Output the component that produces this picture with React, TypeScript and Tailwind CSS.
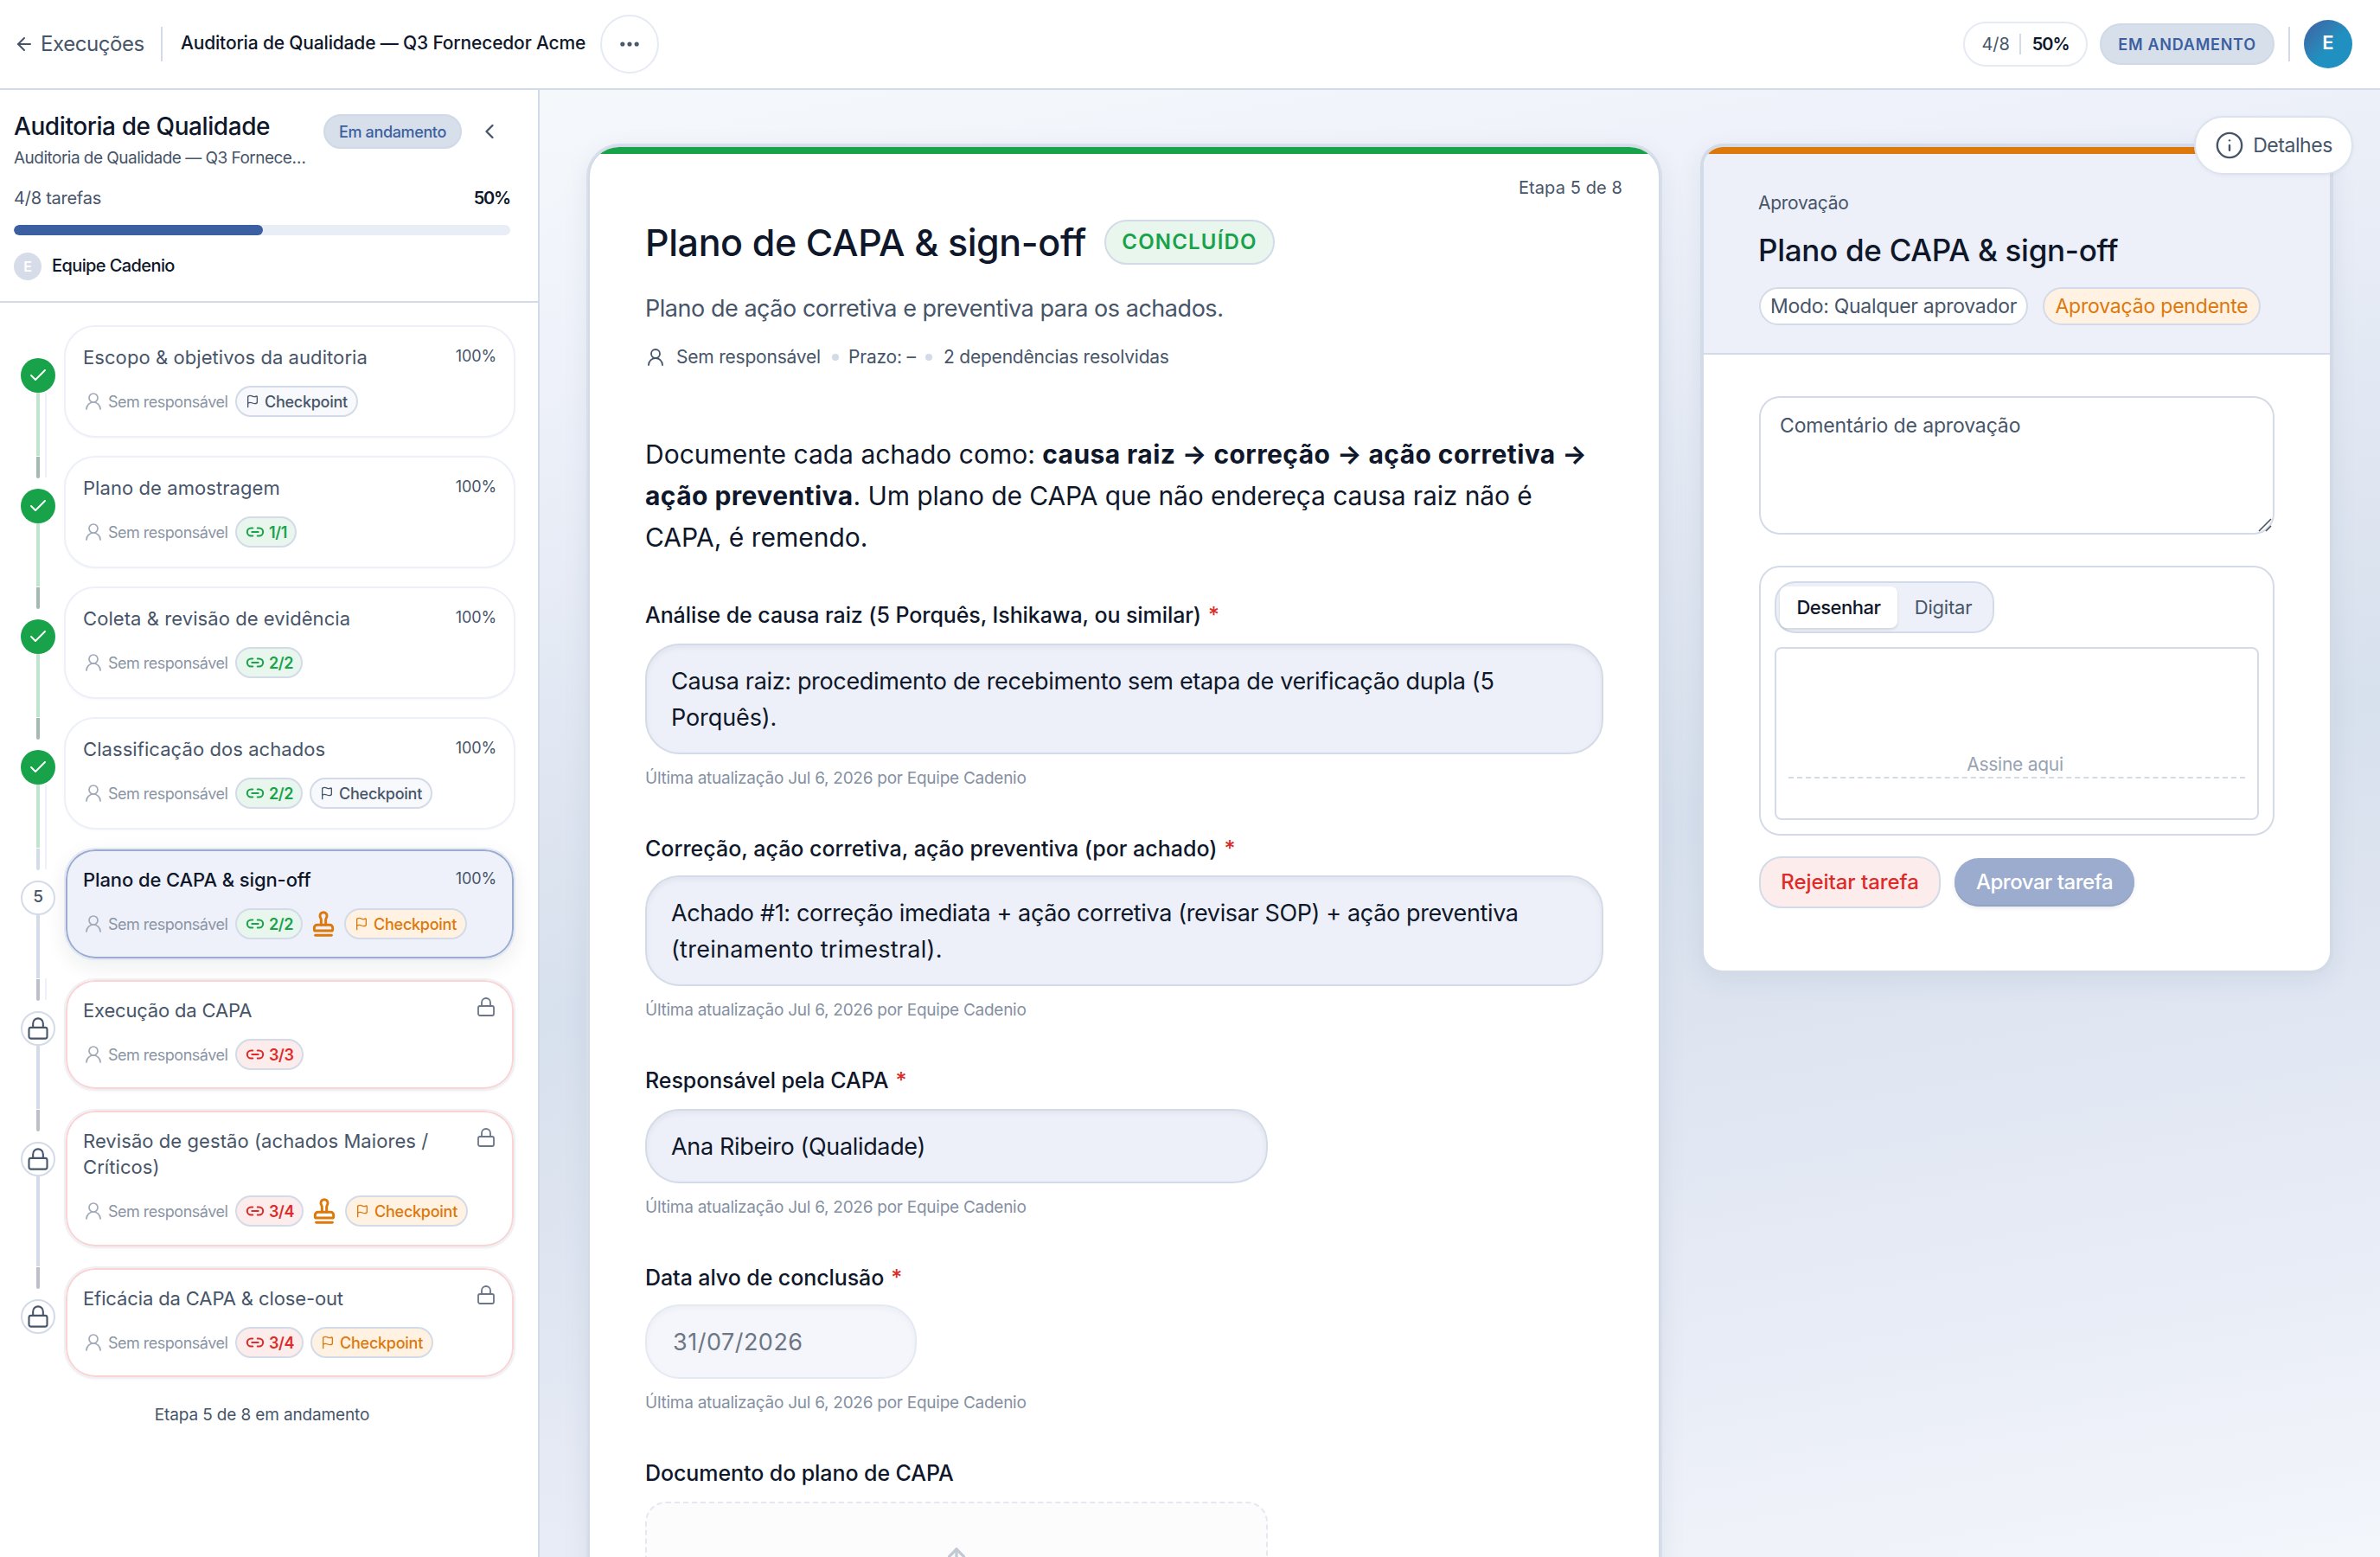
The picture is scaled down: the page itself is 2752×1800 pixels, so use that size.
import type { ReactNode } from "react";
import {
  ArrowLeft,
  Check,
  ChevronLeft,
  Ellipsis,
  Flag,
  Info,
  Link2,
  Lock,
  Stamp,
  Upload,
  UserRound,
} from "lucide-react";

type Status = "done" | "active" | "locked";

interface Step {
  title: string;
  titleClass?: string;
  status: Status;
  deps?: string;
  stamp?: boolean;
  checkpoint?: boolean;
  rail?: string;
  cap?: string;
  guideTop?: boolean;
  guide?: boolean;
  tall?: boolean;
}

const steps: Step[] = [
  { title: "Escopo & objetivos da auditoria", status: "done", checkpoint: true, rail: "bg-[#bfe6cc]", guide: true },
  { title: "Plano de amostragem", status: "done", deps: "1/1", rail: "bg-[#bfe6cc]", cap: "bg-[#a5b9b2]" },
  { title: "Coleta & revisão de evidência", status: "done", deps: "2/2", rail: "bg-[#bfe6cc]", cap: "bg-[#a5b9b2]" },
  { title: "Classificação dos achados", status: "done", deps: "2/2", checkpoint: true, rail: "bg-[#bfe6cc]", cap: "bg-[#a5b9b2]", guide: true },
  { title: "Plano de CAPA & sign-off", titleClass: "font-medium text-[#0f172a] tracking-[-0.1px]", status: "active", deps: "2/2", stamp: true, checkpoint: true, rail: "bg-[#d4dbe8]", cap: "bg-[#d4dbe8]" },
  { title: "Execução da CAPA", titleClass: "text-[#475569] tracking-[-0.18px]", status: "locked", deps: "3/3", rail: "bg-[#d4dbe8]", cap: "bg-[#bdc0c9]", guideTop: true },
  { title: "Revisão de gestão (achados Maiores / Críticos)", status: "locked", deps: "3/4", stamp: true, checkpoint: true, rail: "bg-[#d4dbe8]", cap: "bg-[#bdc0c9]", tall: true },
  { title: "Eficácia da CAPA & close-out", titleClass: "text-[#475569] tracking-[-0.12px]", status: "locked", deps: "3/4", checkpoint: true, cap: "bg-[#bdc0c9]" },
];

const cardStyle: Record<Status, string> = {
  done: "border-[#edf0f8] bg-white shadow-[0_1px_3px_rgba(15,23,42,0.03)]",
  active:
    "border-[#e3e8f3] bg-[#eef1fa] shadow-[inset_0_0_0_2px_#9aacd0,0_8px_24px_rgba(15,23,42,0.07)]",
  locked:
    "border-[#eef0f6] bg-white shadow-[inset_0_0_0_2px_#fad3d2,0_1px_3px_rgba(15,23,42,0.04)]",
};

function Node({ status, index }: { status: Status; index: number }) {
  if (status === "done") {
    return (
      <div className="flex size-10 shrink-0 items-center justify-center rounded-full bg-[#18a34a] text-white">
        <Check size={24} strokeWidth={1.9} />
      </div>
    );
  }
  return (
    <div className="flex size-10 shrink-0 items-center justify-center rounded-full border-2 border-[#d4dbe8] bg-white text-[19px] font-medium text-[#475569]">
      {status === "active" ? <span className="-mt-0.5">{index}</span> : <Lock size={28} strokeWidth={1.8} className="shrink-0" />}
    </div>
  );
}

function StepRow({ step, index, last }: { step: Step; index: number; last: boolean }) {
  const warm = step.status !== "done";
  const depsColor = step.status === "locked" ? "bg-[#fdecec] text-[#dc2b28]" : "bg-[#e9f6ee] text-[#18a34a]";
  const cpColor = warm ? "bg-[#fff2e3] text-[#dd780a]" : "bg-[#f8f9fc] text-[#475569]";
  return (
    <div className="flex">
      <div className="relative ml-6 mr-[10px] flex w-10 shrink-0 flex-col items-center">
        <div className={`mt-px h-[25px] w-1 shrink-0 rounded-b-sm ${step.cap ?? ""}`} />
        <div className="h-3 shrink-0" />
        <Node status={step.status} index={index} />
        {!last && <div className={`w-1 flex-1 ${step.rail ?? ""}`} />}
        {step.guide && <div className="absolute -bottom-[25px] left-[28px] top-[78px] w-0.5 bg-[#eef1fa]" />}
        {step.guideTop && <div className="absolute left-[28px] top-0 h-[25px] w-0.5 bg-[#eef1fa]" />}
      </div>
      <div
        className={`mb-[21px] w-[522px] rounded-[36px] border-2 px-5 ${step.tall ? "h-[161px]" : "h-[130px]"} ${cardStyle[step.status]}`}
      >
        <div className="flex items-start justify-between pt-5">
          <div
            className={`w-[420px] text-[22px] leading-[30px] ${step.titleClass ?? "tracking-[0.07px] text-[#475569]"}`}
          >
            {step.title}
          </div>
          {step.status === "locked" ? (
            <Lock size={24} strokeWidth={1.8} className="-mt-px text-[#6b7689]" />
          ) : (
            <div className="-mt-px text-[18px] leading-[30px] tracking-[-0.1px] text-[#475569]">100%</div>
          )}
        </div>
        <div className="mt-[18px] flex h-9 items-center">
          <UserRound size={24} strokeWidth={1.7} className="text-[#a0a9b8]" />
          <span className="ml-[5px] mr-[9px] w-[138px] whitespace-nowrap text-[18px] tracking-[-0.5px] text-[#8b95a5]">
            Sem responsável
          </span>
          <div className="flex items-center gap-2">
            {step.deps && (
              <div
                className={`flex h-9 items-center gap-[5px] rounded-full border-2 border-[#d4dbe8] pl-[10px] pr-[9px] text-[18px] font-semibold tracking-[-0.4px] ${depsColor}`}
              >
                <Link2 size={22} strokeWidth={2.2} />
                {step.deps}
              </div>
            )}
            {step.stamp && <Stamp size={32} strokeWidth={2.2} className="text-[#dd780a]" />}
            {step.checkpoint && (
              <div
                className={`flex h-9 items-center gap-[6px] rounded-full border-2 border-[#d4dbe8] px-[10px] text-[18px] font-medium tracking-[-0.26px] ${cpColor}`}
              >
                <Flag size={16} strokeWidth={2} />
                Checkpoint
              </div>
            )}
          </div>
        </div>
      </div>
    </div>
  );
}

function Sidebar() {
  return (
    <aside className="flex w-[624px] shrink-0 flex-col border-r-2 border-[#d4dbe8] bg-white">
      <div className="border-b-2 border-[#d4dbe8] px-4 pb-6 pt-[22px]">
        <div className="flex items-start">
          <div className="w-[358px] whitespace-nowrap">
            <h2 className="text-[28px] font-medium leading-10 tracking-[-0.42px] text-[#0f172a]">Auditoria de Qualidade</h2>
            <p className="mt-[3px] text-[19px] leading-7 tracking-[-0.52px] text-[#475569]">
              Auditoria de Qualidade — Q3 Fornece…
            </p>
          </div>
          <div className="mt-1.5 flex h-10 w-40 items-center justify-center rounded-full border-2 border-[#d0d9e7] bg-[#d7dfea] text-[18px] font-medium tracking-[-0.36px] text-[#3b5fa0]">
            Em andamento
          </div>
          <ChevronLeft size={28} strokeWidth={2} className="ml-[18px] mt-3 text-[#475569]" />
        </div>
        <div className="mt-[18px] flex w-[574px] justify-between text-[20px] leading-7">
          <span className="tracking-[-0.25px] text-[#475569]">4/8 tarefas</span>
          <span className="font-semibold tracking-[-1.2px] text-[#0f172a]">50%</span>
        </div>
        <div className="mt-[17px] h-3 w-[574px] overflow-hidden rounded-full bg-[#e9edf6]">
          <div className="h-3 w-[288px] rounded-full bg-[#3b5fa0]" />
        </div>
        <div className="mt-5 flex h-8 items-center gap-3">
          <div className="flex size-8 items-center justify-center rounded-full bg-[#d6dde8] text-[16px] font-semibold text-white">E</div>
          <span className="-mt-0.5 text-[20px] font-medium tracking-[-0.6px] text-[#0f172a]">Equipe Cadenio</span>
        </div>
      </div>
      <div className="pt-[26px]">
        {steps.map((s, i) => (
          <StepRow key={s.title} step={s} index={i + 1} last={i === steps.length - 1} />
        ))}
      </div>
      <p className="mt-[7px] w-[606px] text-center text-[19px] leading-7 tracking-[-0.14px] text-[#475569]">
        Etapa 5 de 8 em andamento
      </p>
    </aside>
  );
}

function Header() {
  return (
    <header className="flex h-[104px] items-center border-b-2 border-[#d4dbe8] bg-white">
      <ArrowLeft size={24} strokeWidth={2} className="ml-4 text-[#475569]" />
      <span className="ml-[7px] w-[120px] text-[24px] tracking-[-0.42px] text-[#475569]">Execuções</span>
      <div className="ml-[19px] h-10 w-0.5 bg-[#d4dbe8]" />
      <h1 className="-mt-0.5 ml-[21px] w-[466px] whitespace-nowrap text-[21px] font-medium tracking-[-0.17px] text-[#0f172a]">
        Auditoria de Qualidade — Q3 Fornecedor Acme
      </h1>
      <div className="ml-[19px] flex size-[68px] items-center justify-center rounded-full border-2 border-[#e6eaf4] text-[#475569]">
        <Ellipsis size={28} strokeWidth={2.4} />
      </div>
      <div className="ml-auto mr-8 flex items-center">
        <div className="flex h-[52px] w-36 items-center justify-center rounded-full border-2 border-[#e6eaf4] text-[20px]">
          <span className="tracking-[-0.1px] text-[#475569]">4/8</span>
          <div className="ml-[11px] mr-[13px] h-6 w-0.5 bg-[#d4dbe8]" />
          <span className="font-semibold tracking-[-1px] text-[#0f172a]">50%</span>
        </div>
        <div className="ml-3.5 flex h-12 w-[202px] items-center justify-center rounded-full border-2 border-[#d0d9e7] bg-[#d7dfea] text-[18px] font-semibold tracking-[0.75px] text-[#3b5fa0]">
          EM ANDAMENTO
        </div>
        <div className="mx-4 h-10 w-0.5 bg-[#d4dbe8]" />
        <div className="flex size-14 items-center justify-center rounded-full bg-linear-135 from-[#3b5fa0] to-[#1f90bf] to-55% pb-1 text-[22px] font-semibold text-white">
          E
        </div>
      </div>
    </header>
  );
}

function Label({ children, required = true }: { children: ReactNode; required?: boolean }) {
  return (
    <div className="whitespace-nowrap text-[25px] font-medium leading-9 tracking-[-0.08px] text-[#0f172a]">
      {children}
      {required && <span className="ml-2 text-[#dc2b28]">*</span>}
    </div>
  );
}

function Hint() {
  return (
    <p className="mb-[49px] mt-3.5 text-[19px] leading-7 tracking-[-0.26px] text-[#8590a2]">
      Última atualização Jul 6, 2026 por Equipe Cadenio
    </p>
  );
}

const fieldBox =
  "flex items-center rounded-[40px] border-2 border-[#d4dbe8] bg-[#edf0f8] pl-7 pt-0.5 text-[27px] leading-[42px] tracking-[-0.34px] text-[#0f172a] shadow-[inset_0_3px_6px_rgba(15,23,42,0.05)]";

function TaskCard() {
  return (
    <section className="h-[1800px] w-[1240px] shrink-0 overflow-hidden rounded-t-[36px] border-2 border-[#d4dbe8] bg-white shadow-[0_0_0_2px_#d8dfeb,0_8px_32px_rgba(30,50,90,0.08)]">
      <div className="h-2 bg-[#18a34a]" />
      <div className="px-16 pt-[25px]">
        <div className="-mr-[22px] text-right text-[20px] leading-7 tracking-[0.1px] text-[#475569]">Etapa 5 de 8</div>
        <div className="mt-[21px] flex h-14 items-center">
          <h2 className="w-[511px] whitespace-nowrap text-[43px] font-medium leading-[56px] tracking-[-0.4px] text-[#0f172a]">
            Plano de CAPA & sign-off
          </h2>
          <div className="ml-5 flex h-[52px] w-[197px] items-center justify-center rounded-full border-2 border-[#d4dbe8] bg-[#e9f6ee] text-[24px] font-semibold tracking-[1.2px] text-[#18a34a]">
            CONCLUÍDO
          </div>
        </div>
        <p className="mt-[29px] text-[27px] leading-10 tracking-[-0.46px] text-[#475569]">
          Plano de ação corretiva e preventiva para os achados.
        </p>
        <div className="mt-5 flex h-8 items-center text-[21px] tracking-[-0.21px] text-[#475569]">
          <UserRound size={24} strokeWidth={1.8} />
          <span className="ml-3 w-[168px] whitespace-nowrap">Sem responsável</span>
          <span className="ml-3 mr-[11px] size-2 rounded-full bg-[#d4dbe8]" />
          <span className="w-[78px]">Prazo: –</span>
          <span className="ml-[11px] mr-[13px] size-2 rounded-full bg-[#d4dbe8]" />
          <span>2 dependências resolvidas</span>
        </div>
        <p className="mb-12 mt-[72px] text-[30px] leading-[48px] text-[#0f172a]">
          Documente cada achado como:{" "}
          <strong className="font-bold tracking-[0.42px]">causa raiz → correção → ação corretiva →</strong>
          <br />
          <strong className="font-bold tracking-[0.42px]">ação preventiva</strong>
          <span className="tracking-[-0.1px]">. Um plano de CAPA que não endereça causa raiz não é</span>
          <br />
          CAPA, é remendo.
        </p>

        <Label>Análise de causa raiz (5 Porquês, Ishikawa, ou similar)</Label>
        <div className={`${fieldBox} mt-[15px] h-32 w-[1108px]`}>
          <p>
            Causa raiz: procedimento de recebimento sem etapa de verificação dupla (5
            <br />
            <span className="tracking-[-0.1px]">Porquês).</span>
          </p>
        </div>
        <Hint />

        <Label>
          <span className="tracking-[0px]">Correção, ação corretiva, ação preventiva (por achado)</span>
        </Label>
        <div className={`${fieldBox} mt-[13px] h-32 w-[1108px]`}>
          <p>
            <span className="tracking-[-0.37px]">
              Achado #1: correção imediata + ação corretiva (revisar SOP) + ação preventiva
            </span>
            <br />
            <span className="tracking-[0.25px]">(treinamento trimestral).</span>
          </p>
        </div>
        <Hint />

        <Label>Responsável pela CAPA</Label>
        <div className={`${fieldBox} mt-[15px] h-[86px] w-[720px]`}>Ana Ribeiro (Qualidade)</div>
        <Hint />

        <Label>Data alvo de conclusão</Label>
        <div className="mt-[13px] flex h-[86px] w-[314px] items-center rounded-[40px] border-2 border-[#e4e9f3] bg-[#f4f6fb] pl-[30px] pt-0.5 text-[27px] tracking-[0.5px] text-[#6d7685] shadow-[inset_0_3px_6px_rgba(15,23,42,0.03)]">
          31/07/2026
        </div>
        <Hint />

        <Label required={false}>Documento do plano de CAPA</Label>
        <div className="mt-[15px] flex h-[200px] w-[720px] justify-center rounded-3xl border-2 border-dashed border-[#e4e8f1] bg-[#fcfcfd] pt-12">
          <Upload size={40} strokeWidth={2} className="text-[#c3c9d4]" />
        </div>
      </div>
    </section>
  );
}

function ApprovalPanel() {
  return (
    <section className="w-[728px] shrink-0 self-start overflow-hidden rounded-3xl border-2 border-[#d4dbe8] bg-white shadow-[0_0_0_2px_#d3dbe7,0_8px_32px_rgba(30,50,90,0.08)]">
      <div className="h-2 bg-[#dd780a]" />
      <div className="border-b-2 border-[#d4dbe8] bg-[#edf0f8] px-16 pb-8 pt-[41px]">
        <div className="-ml-px text-[21px] leading-8 tracking-[-0.3px] text-[#475569]">Aprovação</div>
        <h3 className="-ml-px mt-4 text-[35px] font-medium leading-[44px] tracking-[-0.28px] text-[#0f172a]">
          Plano de CAPA & sign-off
        </h3>
        <div className="mt-[21px] flex gap-[17px] whitespace-nowrap text-[23px]">
          <div className="flex h-11 w-[311px] items-center justify-center rounded-full border-2 border-[#d4dbe8] bg-white tracking-[-0.3px] text-[#475569]">
            Modo: Qualquer aprovador
          </div>
          <div className="flex h-11 w-[252px] items-center justify-center rounded-full border-2 border-[#d4dbe8] bg-[#fff2e3] tracking-[-0.2px] text-[#dd780a]">
            Aprovação pendente
          </div>
        </div>
      </div>
      <div className="px-16 pb-[72px] pt-12">
        <div className="relative h-40 w-[596px] rounded-3xl border-2 border-[#d4dbe8] pl-[22px] pt-[15px] text-[23px] leading-[34px] tracking-[-0.14px] text-[#475569]">
          Comentário de aprovação
          <svg viewBox="0 0 18 18" className="absolute bottom-0 right-0 size-[18px]" fill="none" stroke="#4b5563" strokeWidth="1.6">
            <path d="M2 16 16 2M10 16l6-6" />
          </svg>
        </div>
        <div className="mt-9 h-[312px] w-[596px] rounded-3xl border-2 border-[#d4dbe8] p-4">
          <div className="flex h-[60px] w-[254px] rounded-3xl border-2 border-[#d4dbe8] bg-[#edf0f8] p-1 text-[22px]">
            <div className="flex h-12 w-[136px] items-center justify-center rounded-lg bg-white font-medium tracking-[-0.5px] text-[#0f172a] shadow-[0_2px_3px_rgba(15,23,42,0.12)]">
              Desenhar
            </div>
            <div className="flex h-12 flex-1 items-center justify-center tracking-[-0.2px] text-[#475569]">Digitar</div>
          </div>
          <div className="mt-4 flex h-[200px] flex-col justify-end rounded-lg border-2 border-[#d4dbe8] px-3.5 pb-[46px]">
            <div className="border-b-2 border-dashed border-[#d4dbe8] pr-1 pt-px text-center text-[21px] leading-7 tracking-[-0.27px] text-[#98a3b3]">
              Assine aqui
            </div>
          </div>
        </div>
        <div className="mt-6 flex items-center gap-4 text-[24px] font-medium">
          <div className="flex h-[60px] w-[210px] items-center justify-center rounded-[26px] border-2 border-[#d4dbe8] bg-[#fdecec] tracking-[-0.05px] text-[#dc2b28]">
            Rejeitar tarefa
          </div>
          <div className="flex h-14 w-[208px] items-center justify-center rounded-full bg-[#9caccf] tracking-[-0.47px] text-white shadow-[inset_0_-2px_0_#94a3bf,0_2px_4px_rgba(30,50,90,0.10)]">
            Aprovar tarefa
          </div>
        </div>
      </div>
    </section>
  );
}

export default function App() {
  return (
    <div className="h-[1800px] w-[2752px] overflow-hidden font-['Inter',sans-serif]">
      <Header />
      <div className="flex h-[1696px]">
        <Sidebar />
        <main className="relative flex flex-1 gap-12 bg-[linear-gradient(170deg,#f5f8fb_0%,#eff2fa_14%,#d7e0ed_52%,#e8ecf6_82%,#f3f6fb_100%)] pl-14 pt-16">
          <TaskCard />
          <ApprovalPanel />
          <div className="absolute right-[31px] top-[30px] flex h-[68px] w-[184px] items-center justify-center gap-2.5 rounded-full border-2 border-[#dce3ef] bg-white text-[23px] tracking-[-0.45px] text-[#475569] shadow-[0_1px_4px_rgba(15,23,42,0.05)]">
            <Info size={34} strokeWidth={1.7} />
            Detalhes
          </div>
        </main>
      </div>
    </div>
  );
}
